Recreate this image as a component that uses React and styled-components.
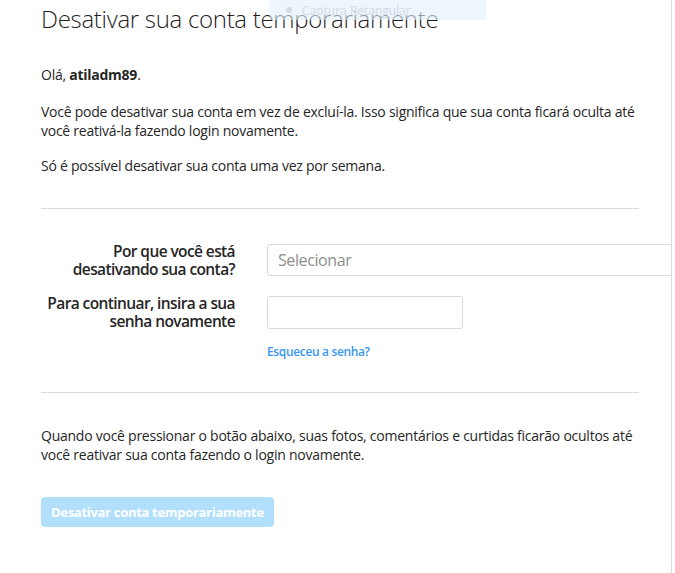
import styled, { createGlobalStyle } from "styled-components";

const GlobalStyle = createGlobalStyle`
  html, body {
    margin: 0;
    padding: 0;
    background: #fff;
  }
  body {
    font-family: "Open Sans", "Liberation Sans", sans-serif;
    color: #262626;
  }
`;

const Panel = styled.main`
  position: relative;
  width: 672px;
  height: 573px;
  border-right: 1px solid #dbdbdb;
  box-sizing: border-box;
  overflow: hidden;
`;

const Content = styled.section`
  display: flex;
  flex-direction: column;
  padding: 4px 33px 0 41px;
`;

const Title = styled.h1`
  margin: 0;
  font-size: 24px;
  line-height: 30px;
  font-weight: 300;
  letter-spacing: -0.3px;
  color: #1f1f1f;
`;

const Text = styled.p`
  margin: ${(p) => p.$top || 0}px 0 0;
  font-size: 14px;
  line-height: 19px;
  letter-spacing: -0.25px;
`;

const Divider = styled.hr`
  margin: ${(p) => p.$top}px 0 0;
  border: 0;
  height: 1px;
  background: #dbdbdb;
  width: 598px;
`;

const Form = styled.div`
  display: flex;
  flex-direction: column;
  gap: 16px;
  margin-top: 33px;
`;

const Row = styled.div`
  display: grid;
  grid-template-columns: 194px 1fr;
  column-gap: 32px;
  align-items: center;
`;

const Label = styled.label`
  text-align: right;
  white-space: nowrap;
  font-size: 15.5px;
  line-height: 18px;
  font-weight: 600;
  letter-spacing: -0.6px;
  color: #262626;
`;

const Select = styled.div`
  box-sizing: border-box;
  height: 32px;
  width: 420px;
  border: 1px solid #dbdbdb;
  border-radius: 3px;
  display: flex;
  align-items: center;
  padding: 0 10px;
  font-size: 16px;
  color: #8e8e8e;
  letter-spacing: -0.4px;
`;

const Input = styled.input`
  box-sizing: border-box;
  height: 33px;
  width: 196px;
  border: 1px solid #dbdbdb;
  border-radius: 3px;
  background: #fff;
  outline: none;
`;

const Link = styled.a`
  margin: 14px 0 0 226px;
  font-size: 12px;
  line-height: 16px;
  font-weight: 600;
  letter-spacing: -0.35px;
  color: #3897f0;
  text-decoration: none;
`;

const Button = styled.button`
  align-self: flex-start;
  margin-top: 33px;
  height: 30px;
  padding: 0 10px;
  border: 0;
  border-radius: 4px;
  background: #b2dffc;
  color: #fff;
  font-family: inherit;
  font-size: 13px;
  font-weight: 700;
  letter-spacing: -0.3px;
`;

const Snip = styled.div`
  position: absolute;
  top: 0;
  left: 270px;
  width: 216px;
  height: 20px;
  background: rgba(225, 238, 252, 0.6);
  display: flex;
  align-items: center;
  gap: 8px;
  padding-left: 14px;
  box-sizing: border-box;
  font-size: 12px;
  color: #d3dae2;
`;

export default function App() {
  return (
    <>
      <GlobalStyle />
      <Panel>
        <Snip>
          <svg width="10" height="10" viewBox="0 0 10 10">
            <circle cx="5" cy="5" r="3" fill="#d3dae2" />
          </svg>
          Captura Retangular
        </Snip>
        <Content>
          <Title>Desativar sua conta temporariamente</Title>
          <Text $top={31}>
            Olá, <b>atiladm89</b>.
          </Text>
          <Text $top={18}>
            Você pode desativar sua conta em vez de excluí-la. Isso significa que sua conta ficará oculta até
            você reativá-la fazendo login novamente.
          </Text>
          <Text $top={16}>Só é possível desativar sua conta uma vez por semana.</Text>
          <Divider $top={33} />
          <Form>
            <Row>
              <Label>
                Por que você está
                <br />
                desativando sua conta?
              </Label>
              <Select>Selecionar</Select>
            </Row>
            <Row>
              <Label>
                Para continuar, insira a sua
                <br />
                senha novamente
              </Label>
              <Input type="password" />
            </Row>
          </Form>
          <Link href="#">Esqueceu a senha?</Link>
          <Divider $top={32} />
          <Text $top={33}>
            Quando você pressionar o botão abaixo, suas fotos, comentários e curtidas ficarão ocultos até
            você reativar sua conta fazendo o login novamente.
          </Text>
          <Button>Desativar conta temporariamente</Button>
        </Content>
      </Panel>
    </>
  );
}
